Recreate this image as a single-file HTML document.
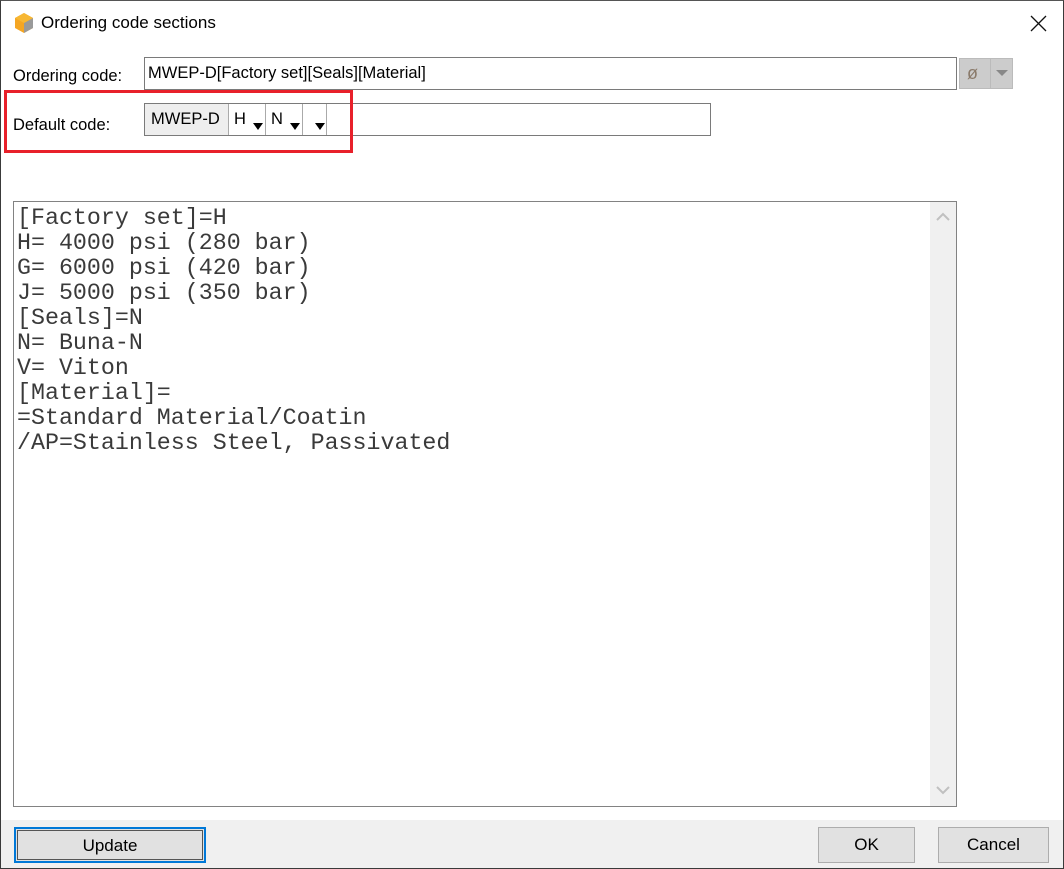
<!DOCTYPE html>
<html><head><style>
*{margin:0;padding:0;box-sizing:border-box}
body{width:1064px;height:869px;background:#fff;font-family:"Liberation Sans",sans-serif;position:relative;overflow:hidden}
.win{position:absolute;left:0;top:0;width:1064px;height:869px;border:1px solid #3a3a3a;border-top-color:#555}
.abs{position:absolute}
.lbl{font-size:16.5px;color:#000}
.mono{font-family:"Liberation Mono",monospace;font-size:23.3px;line-height:25px;color:#3a3a3a;white-space:pre}
.btn{position:absolute;background:#e1e1e1;border:1px solid #adadad;font-size:17px;text-align:center;line-height:34px}
</style></head><body>
<div class="win"></div>
<svg class="abs" style="left:13px;top:12px" width="22" height="22" viewBox="0 0 22 22">
<polygon points="11,1 20,6 20,16 11,21 2,16 2,6" fill="#f5a623"/>
<polygon points="11,11 20,6 20,16 11,21" fill="#9a9a9a"/>
<polygon points="11,1 20,6 11,11 2,6" fill="#f7b733"/>
</svg>
<div class="abs" style="left:41px;top:13px;font-size:17px">Ordering code sections</div>
<svg class="abs" style="left:1030px;top:15px" width="17" height="17"><path d="M1 1L16 16M16 1L1 16" stroke="#111" stroke-width="1.3"/></svg>

<div class="abs lbl" style="left:13px;top:67px">Ordering code:</div>
<div class="abs" style="left:144px;top:57px;width:813px;height:33px;border:1px solid #7a7a7a;font-size:16.5px;padding:6px 0 0 3px">MWEP-D[Factory set][Seals][Material]</div>
<div class="abs" style="left:959px;top:58px;width:54px;height:31px;background:#ccc;border:1px solid #bbb"></div>
<div class="abs" style="left:990px;top:58px;width:1px;height:31px;background:#bbb"></div>
<div class="abs" style="left:967px;top:63px;font-size:18px;color:#8a7a6a">ø</div>
<svg class="abs" style="left:996px;top:70px" width="12" height="7"><polygon points="0,0 12,0 6,6" fill="#888"/></svg>

<div class="abs lbl" style="left:13px;top:116px">Default code:</div>
<div class="abs" style="left:144px;top:103px;width:567px;height:33px;border:1px solid #7a7a7a"></div>
<div class="abs" style="left:145px;top:104px;width:83px;height:31px;background:#eee;font-size:16.5px;padding:6px 0 0 6px">MWEP-D</div>
<div class="abs" style="left:228px;top:104px;width:1px;height:31px;background:#aaa"></div>
<div class="abs" style="left:265px;top:104px;width:1px;height:31px;background:#aaa"></div>
<div class="abs" style="left:302px;top:104px;width:1px;height:31px;background:#aaa"></div>
<div class="abs" style="left:326px;top:104px;width:1px;height:31px;background:#aaa"></div>
<div class="abs" style="left:234px;top:110px;font-size:16.5px">H</div>
<div class="abs" style="left:271px;top:110px;font-size:16.5px">N</div>
<svg class="abs" style="left:253px;top:123px" width="10" height="8"><polygon points="0,0 10,0 5,7" fill="#000"/></svg>
<svg class="abs" style="left:290px;top:123px" width="10" height="8"><polygon points="0,0 10,0 5,7" fill="#000"/></svg>
<svg class="abs" style="left:315px;top:123px" width="10" height="8"><polygon points="0,0 10,0 5,7" fill="#000"/></svg>
<div class="abs" style="left:4px;top:90px;width:349px;height:63px;border:3.5px solid #e8202a"></div>

<div class="abs" style="left:13px;top:201px;width:944px;height:606px;border:1px solid #828282"></div>
<div class="abs" style="left:930px;top:202px;width:26px;height:604px;background:#f0f0f0"></div>
<svg class="abs" style="left:936px;top:212px" width="14" height="9"><path d="M1 8L7 2L13 8" stroke="#c0c0c0" stroke-width="2" fill="none"/></svg>
<svg class="abs" style="left:936px;top:786px" width="14" height="9"><path d="M1 1L7 7L13 1" stroke="#c0c0c0" stroke-width="2" fill="none"/></svg>
<div class="abs mono" style="left:17px;top:206px">[Factory set]=H
H= 4000 psi (280 bar)
G= 6000 psi (420 bar)
J= 5000 psi (350 bar)
[Seals]=N
N= Buna-N
V= Viton
[Material]=
=Standard Material/Coatin
/AP=Stainless Steel, Passivated</div>

<div class="abs" style="left:1px;top:820px;width:1062px;height:48px;background:#f0f0f0"></div>
<div class="btn" style="left:14px;top:827px;width:192px;height:36px;border:2px solid #0078d7;box-shadow:inset 0 0 0 1px #e1e1e1,inset 0 0 0 2px #555">Update</div>
<div class="btn" style="left:818px;top:827px;width:97px;height:36px">OK</div>
<div class="btn" style="left:938px;top:827px;width:111px;height:36px">Cancel</div>
</body></html>
